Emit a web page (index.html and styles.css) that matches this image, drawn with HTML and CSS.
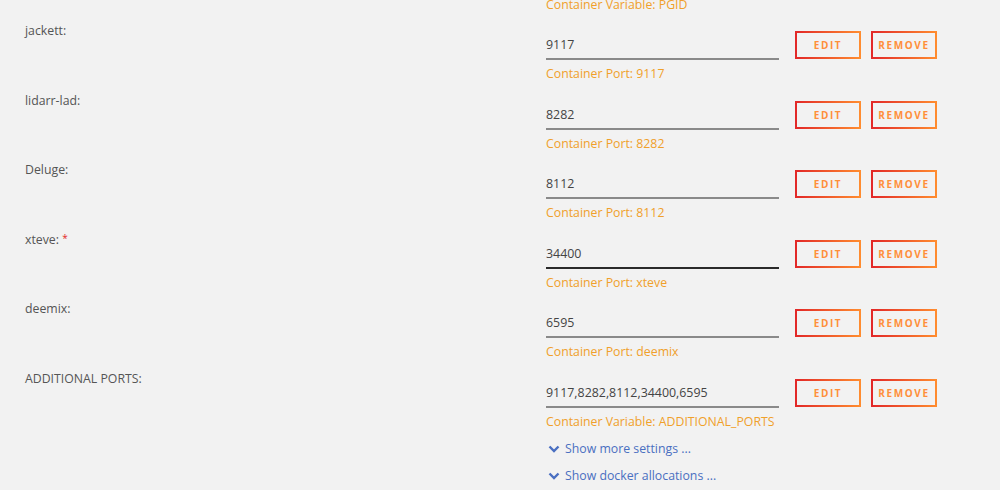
FILE: index.html
```html
<!DOCTYPE html>
<html>
<head>
<meta charset="utf-8">
<link rel="stylesheet" href="styles.css">
</head>
<body>
<div class="form">
  <div class="row row-top">
    <div class="label"></div>
    <div class="field"><div class="hint">Container Variable: PGID</div></div>
  </div>

  <div class="row">
    <div class="label">jackett:</div>
    <div class="field">
      <div class="line"><div class="input">9117</div><button class="btn">EDIT</button><button class="btn">REMOVE</button></div>
      <div class="hint">Container Port: 9117</div>
    </div>
  </div>

  <div class="row">
    <div class="label">lidarr-lad:</div>
    <div class="field">
      <div class="line"><div class="input">8282</div><button class="btn">EDIT</button><button class="btn">REMOVE</button></div>
      <div class="hint">Container Port: 8282</div>
    </div>
  </div>

  <div class="row">
    <div class="label">Deluge:</div>
    <div class="field">
      <div class="line"><div class="input">8112</div><button class="btn">EDIT</button><button class="btn">REMOVE</button></div>
      <div class="hint">Container Port: 8112</div>
    </div>
  </div>

  <div class="row">
    <div class="label">xteve: <span class="req">*</span></div>
    <div class="field">
      <div class="line"><div class="input input-dark">34400</div><button class="btn">EDIT</button><button class="btn">REMOVE</button></div>
      <div class="hint">Container Port: xteve</div>
    </div>
  </div>

  <div class="row">
    <div class="label">deemix:</div>
    <div class="field">
      <div class="line"><div class="input">6595</div><button class="btn">EDIT</button><button class="btn">REMOVE</button></div>
      <div class="hint">Container Port: deemix</div>
    </div>
  </div>

  <div class="row">
    <div class="label">ADDITIONAL PORTS:</div>
    <div class="field">
      <div class="line"><div class="input">9117,8282,8112,34400,6595</div><button class="btn">EDIT</button><button class="btn">REMOVE</button></div>
      <div class="hint">Container Variable: ADDITIONAL_PORTS</div>
    </div>
  </div>

  <div class="row row-links">
    <div class="label"></div>
    <div class="field links">
      <a class="more"><svg viewBox="0 0 12 8" width="12" height="8"><path d="M1.5 1.5 L6 6 L10.5 1.5" fill="none" stroke="#4a6fc1" stroke-width="2.4"/></svg>Show more settings ...</a>
      <a class="more"><svg viewBox="0 0 12 8" width="12" height="8"><path d="M1.5 1.5 L6 6 L10.5 1.5" fill="none" stroke="#4a6fc1" stroke-width="2.4"/></svg>Show docker allocations ...</a>
    </div>
  </div>
</div>
</body>
</html>
```

FILE: styles.css
```css
html, body {
  margin: 0;
  padding: 0;
  background: #f2f2f2;
  font-family: "Open Sans", "Noto Sans", sans-serif;
  overflow: hidden;
}

.form {
  margin-top: -3px;
}

.row {
  display: grid;
  grid-template-columns: 546px 1fr;
  height: 69.6px;
}

.row-top {
  height: 25px;
}

.row-links {
  height: auto;
}

.label {
  padding-left: 25px;
  font-size: 12.3px;
  line-height: 18px;
  color: #555;
}

.req {
  color: #e22828;
  font-size: 10px;
  vertical-align: top;
  position: relative;
  top: -2px;
}

.field {
  padding-top: 9px;
}

.row-top .field {
  padding-top: 0;
}

.line {
  display: flex;
  align-items: flex-start;
  height: 29px;
}

.input {
  width: 233px;
  height: 27px;
  border-bottom: 2px solid #8a8a8a;
  font-size: 12.4px;
  line-height: 27px;
  color: #444;
  margin-right: 16px;
}

.input-dark {
  border-bottom-color: #2a2a2a;
}

.btn {
  box-sizing: border-box;
  width: 66px;
  height: 28px;
  margin: 0 10px 0 0;
  padding: 0;
  background: transparent;
  border: 2px solid;
  border-image: linear-gradient(90deg, #e22828, #ff8c2f) 1;
  font-family: "Open Sans", "Noto Sans", sans-serif;
  font-weight: 700;
  font-size: 10px;
  letter-spacing: 1.6px;
  color: #ff8f3a;
  cursor: pointer;
}

.hint {
  margin-top: 6px;
  font-size: 12.3px;
  line-height: 16px;
  color: #f0a02a;
}

.row-top .hint {
  margin-top: 0;
}

.links {
  padding-top: 1px;
  display: flex;
  flex-direction: column;
  gap: 11px;
}

.more {
  display: flex;
  align-items: center;
  font-size: 12.3px;
  line-height: 16px;
  color: #4a6fc1;
  gap: 5px;
  padding-left: 2px;
}
```
